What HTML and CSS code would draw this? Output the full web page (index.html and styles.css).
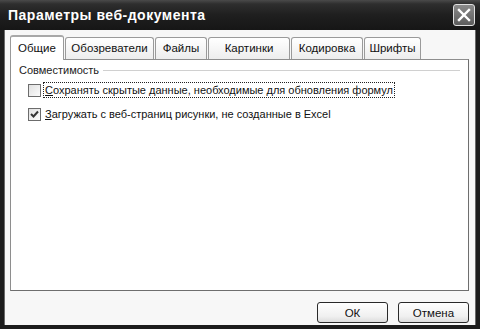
FILE: index.html
```html
<!DOCTYPE html>
<html lang="ru">

<head>
    <meta charset="UTF-8">
    <title>Параметры веб-документа</title>
    <link rel="stylesheet" href="styles.css">
</head>

<body>
    <div class="window">
        <div class="titlebar">
            <span class="title">Параметры веб-документа</span>
            <button class="close-btn" aria-label="Закрыть">
                <svg width="14" height="14" viewBox="0 0 14 14">
                    <path d="M2 2 L12 12 M12 2 L2 12" stroke="#fff" stroke-width="2.4" stroke-linecap="square"/>
                </svg>
            </button>
        </div>

        <div class="client">
            <div class="tabs">
                <div class="tab active w1">Общие</div>
                <div class="tab w2">Обозреватели</div>
                <div class="tab w3">Файлы</div>
                <div class="tab w4">Картинки</div>
                <div class="tab w5">Кодировка</div>
                <div class="tab w6">Шрифты</div>
            </div>

            <div class="panel">
                <div class="group-title">
                    <span>Совместимость</span>
                    <div class="group-line"></div>
                </div>

                <label class="check-row">
                    <span class="box"></span>
                    <span class="check-text focused"><u>С</u>охранять скрытые данные, необходимые для обновления формул</span>
                </label>

                <label class="check-row">
                    <span class="box">
                        <svg width="9" height="9" viewBox="0 0 9 9">
                            <path d="M1 4 L3.5 6.5 L8 1.5" stroke="#333" stroke-width="2" fill="none"/>
                        </svg>
                    </span>
                    <span class="check-text"><u>З</u>агружать с веб-страниц рисунки, не созданные в Excel</span>
                </label>
            </div>

            <div class="buttons">
                <button class="btn">ОК</button>
                <button class="btn">Отмена</button>
            </div>
        </div>
    </div>
</body>

</html>
```

FILE: styles.css
```css
* {
    margin: 0;
    padding: 0;
    box-sizing: border-box;
}

body {
    width: 480px;
    height: 329px;
    overflow: hidden;
    font-family: 'Liberation Sans', Arial, sans-serif;
    font-size: 11px;
    color: #111;
}

.window {
    width: 480px;
    height: 329px;
    background-color: #1c1c1c;
    padding: 0 4px 4px 4px;
    display: flex;
    flex-direction: column;
}

.titlebar {
    height: 30px;
    margin: 0 -4px;
    padding: 0 5px 0 8px;
    display: flex;
    align-items: center;
    justify-content: space-between;
    background: linear-gradient(#4a4a4a 0px, #2e2e2e 4px, #1f1f1f 15px, #161616 30px);
}

.title {
    color: #fff;
    font-weight: bold;
    font-size: 14px;
    letter-spacing: 0.5px;
}

.close-btn {
    width: 22px;
    height: 22px;
    border: 1px solid #e0e0e0;
    border-radius: 3px;
    background: linear-gradient(#8a8a8a, #5c5c5c);
    display: flex;
    align-items: center;
    justify-content: center;
}

.client {
    flex: 1;
    background-color: #f7f7f7;
    border-left: 1px solid #6a6a6a;
    border-right: 1px solid #6a6a6a;
    padding: 5px 6px 0 5px;
    display: flex;
    flex-direction: column;
}

.tabs {
    display: flex;
    align-items: flex-end;
    height: 24px;
    position: relative;
    z-index: 1;
}

.tab {
    height: 22px;
    margin-right: 1px;
    border: 1px solid #9a9a9a;
    border-bottom: none;
    border-radius: 3px 3px 0 0;
    background: linear-gradient(#ffffff, #ededed);
    text-align: center;
    line-height: 20px;
    font-size: 11.5px;
    color: #111;
}

.tab.active {
    height: 25px;
    margin-bottom: -1px;
    background: #fff;
    border-top: 2px solid #a8a8a8;
    line-height: 22px;
}

.w1 { width: 54px; }
.w2 { width: 89px; }
.w3 { width: 52px; }
.w4 { width: 82px; }
.w5 { width: 72px; }
.w6 { width: 57px; }

.panel {
    height: 232px;
    background-color: #fff;
    border: 1px solid #8e8e8e;
    border-right-color: #6e6e6e;
    border-bottom-color: #6e6e6e;
    padding: 3px 8px 0 8px;
}

.group-title {
    display: flex;
    align-items: center;
    gap: 4px;
    height: 13px;
    color: #222;
}

.group-line {
    flex: 1;
    height: 2px;
    border-top: 1px solid #d0d0d0;
    border-bottom: 1px solid #fff;
    margin-top: 2px;
}

.check-row {
    display: flex;
    align-items: center;
    gap: 2px;
    margin-left: 9px;
    margin-top: 6px;
    height: 16px;
}

.check-row + .check-row {
    margin-top: 8px;
}

.box {
    width: 13px;
    height: 13px;
    border: 1px solid #6c6c6c;
    background: linear-gradient(135deg, #e0e0e0, #fbfbfb);
    display: flex;
    align-items: center;
    justify-content: center;
}

.check-text {
    padding: 0 1px;
    line-height: 14px;
    font-size: 11px;
    border: 1px dotted transparent;
}

.check-text.focused {
    border-color: #222;
}

.buttons {
    display: flex;
    justify-content: flex-end;
    gap: 10px;
    padding-top: 11px;
    padding-right: 0;
}

.btn {
    width: 71px;
    height: 21px;
    border: 1px solid #2a2a2a;
    border-radius: 3px;
    background: linear-gradient(#ffffff, #f0f0f0 70%, #dcdcdc);
    font-family: 'Liberation Sans', Arial, sans-serif;
    font-size: 11.5px;
    color: #111;
}
```
